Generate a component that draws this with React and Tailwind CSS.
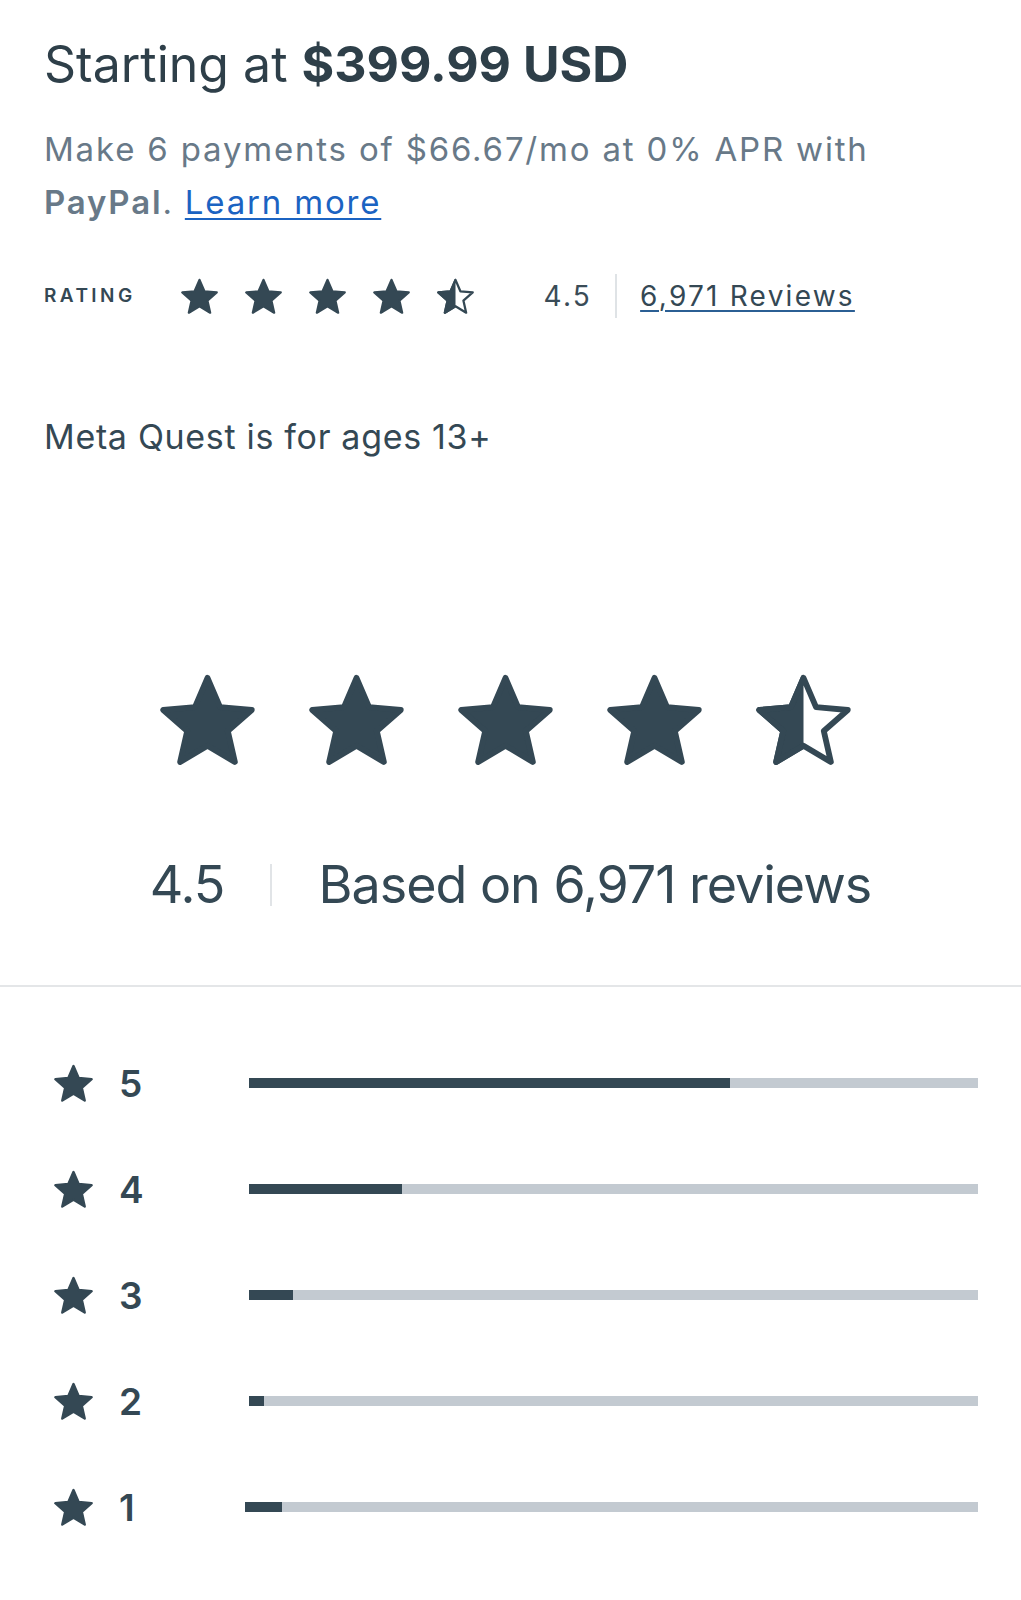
import React from "react";

const STAR =
  "M50 2 L62.94 32.2 L95.65 35.17 L70.92 56.8 L78.22 88.83 L50 72 L21.78 88.83 L29.08 56.8 L4.35 35.17 L37.06 32.2 Z";

const Star = ({ size, half = false, id }) => {
  const h = Math.round((size * 96) / 100);
  if (half) {
    return (
      <svg width={size} height={h} viewBox="-1 -3 102 98" className="shrink-0">
        <defs>
          <clipPath id={id}>
            <rect x="-5" y="-5" width="55" height="110" />
          </clipPath>
        </defs>
        <path d={STAR} fill="#344854" stroke="#344854" strokeWidth="6" strokeLinejoin="round" clipPath={`url(#${id})`} />
        <path d={STAR} fill="none" stroke="#344854" strokeWidth="6" strokeLinejoin="round" />
      </svg>
    );
  }
  return (
    <svg width={size} height={h} viewBox="-1 -3 102 98" className="shrink-0">
      <path d={STAR} fill="#344854" stroke="#344854" strokeWidth="6" strokeLinejoin="round" />
    </svg>
  );
};

const rows = [
  { n: 5, pct: 66 },
  { n: 4, pct: 21 },
  { n: 3, pct: 6 },
  { n: 2, pct: 2 },
  { n: 1, pct: 5 },
];

const App = () => {
  return (
    <div className="w-[1021px] min-h-[1600px] bg-white font-['Inter','Liberation_Sans',sans-serif] text-[#2e3f49]">
      <div className="px-[44px] pt-[39px]">
        <div className="text-[50px] leading-none">
          Starting at <span className="font-bold">$399.99 USD</span>
        </div>
        <p className="mt-[34px] text-[33px] leading-[53px] tracking-[0.055em] text-[#687988]">
          Make 6 payments of $66.67/mo at 0% APR with
          <br />
          <span className="font-semibold">PayPal</span>.{" "}
          <a href="#" className="text-[#1b63c2] underline underline-offset-4 decoration-[1.5px]">
            Learn more
          </a>
        </p>

        <div className="mt-[45px] flex items-center h-[44px]">
          <span className="text-[19px] font-semibold tracking-[0.18em] text-[#344854]">RATING</span>
          <div className="ml-[44px] flex items-center gap-[25px]">
            <Star size={39} />
            <Star size={39} />
            <Star size={39} />
            <Star size={39} />
            <Star size={39} half id="smallhalf" />
          </div>
          <span className="ml-[69px] text-[28px] tracking-[0.08em] text-[#3a4c57]">4.5</span>
          <span className="mx-[23px] h-[44px] w-[2px] bg-[#dfe3e6]" />
          <a href="#" className="text-[28px] tracking-[0.08em] text-[#344854] underline underline-offset-4 decoration-[#2b5f94] decoration-[1.5px]">
            6,971 Reviews
          </a>
        </div>

        <p className="mt-[102px] text-[34px] leading-none tracking-[0.02em] text-[#344854]">Meta Quest is for ages 13+</p>
      </div>

      <div className="mt-[219px] flex justify-center gap-[50px] pr-[10px]">
        <Star size={99} />
        <Star size={99} />
        <Star size={99} />
        <Star size={99} />
        <Star size={99} half id="bighalf" />
      </div>

      <div className="mt-[91px] flex items-center justify-center text-[52px] leading-none tracking-[-1px] text-[#344854]">
        <span>4.5</span>
        <span className="mx-[46px] h-[42px] w-[2px] bg-[#e1e4e7]" />
        <span>Based on 6,971 reviews</span>
      </div>

      <div className="mt-[74px] h-[2px] bg-[#e4e6e8]" />

      <div className="mt-[43px] pl-[53px] pr-[43px]">
        {rows.map((r) => (
          <div key={r.n} className="h-[106px] flex items-center">
            <Star size={41} />
            <span className="ml-[25px] w-[130px] text-[37px] font-semibold text-[#344854] leading-none">{r.n}</span>
            <div className={r.n === 1 ? "flex-1 h-[10px] bg-[#c3cad1] -ml-1" : "flex-1 h-[10px] bg-[#c3cad1]"}>
              <div className="h-full bg-[#344854]" style={{ width: `${r.pct}%` }} />
            </div>
          </div>
        ))}
      </div>
    </div>
  );
};

export default App;
